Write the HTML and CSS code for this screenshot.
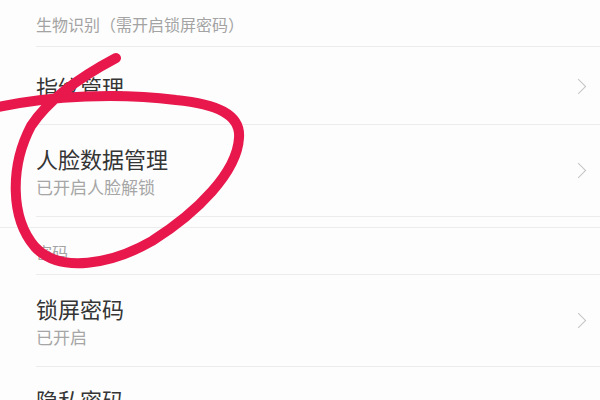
FILE: index.html
```html
<!DOCTYPE html>
<html lang="zh-CN">
<head>
  <meta charset="UTF-8" />
  <meta name="viewport" content="width=device-width, initial-scale=1.0"/>
  <title>生物识别与密码</title>
  <link rel="stylesheet" href="styles.css">
</head>
<body>

  <main class="settings">
    <div class="section-title">生物识别（需开启锁屏密码）</div>

    <div class="row single">
      <div class="row-text">
        <div class="row-title">指纹管理</div>
      </div>
      <span class="chevron"></span>
    </div>

    <div class="row">
      <div class="row-text">
        <div class="row-title">人脸数据管理</div>
        <div class="row-sub">已开启人脸解锁</div>
      </div>
      <span class="chevron"></span>
    </div>

    <div class="section-gap"></div>

    <div class="section-title">密码</div>

    <div class="row">
      <div class="row-text">
        <div class="row-title">锁屏密码</div>
        <div class="row-sub">已开启</div>
      </div>
      <span class="chevron"></span>
    </div>

    <div class="row last">
      <div class="row-text">
        <div class="row-title">隐私密码</div>
      </div>
    </div>
  </main>

  <!-- hand-drawn mark over the list -->
  <svg class="scribble" width="600" height="400" viewBox="0 0 600 400">
    <path d="M116 58 C82 76 48 100 31 126 C10 166 10 218 35 247 C60 274 112 264 152 241 C198 212 237 172 239 138 C241 114 216 104 176 100 C120 93 52 95 -6 108"
          fill="none" stroke="#e8174c" stroke-width="10" stroke-linecap="round" stroke-linejoin="round"/>
  </svg>

</body>
</html>
```

FILE: styles.css
```css
body {
  margin: 0;
  padding: 0;
  background-color: #fdfdfd;
  font-family: "Noto Sans CJK SC", "Noto Sans", sans-serif;
  color: #333;
  width: 600px;
  height: 400px;
  overflow: hidden;
  position: relative;
}

.settings {
  display: flex;
  flex-direction: column;
}

.section-title {
  position: relative;
  height: 47px;
  line-height: 48px;
  padding-left: 36px;
  font-size: 16px;
  color: #a3a3a3;
}

/* inset dividers */
.section-title::after,
.row::after {
  content: "";
  position: absolute;
  left: 36px;
  right: 0;
  bottom: 0;
  height: 1px;
  background-color: #ececec;
}

.row {
  position: relative;
  display: flex;
  align-items: center;
  justify-content: space-between;
  padding: 17px 10px 18px 36px;
}

.row.single {
  padding: 23px 10px 23px 36px;
}

.row.last {
  padding-top: 16px;
}

.row-title {
  font-size: 22px;
  line-height: 32px;
  color: #353535;
}

.row-sub {
  font-size: 17px;
  line-height: 25px;
  color: #a6a6a6;
}

.chevron {
  width: 10px;
  height: 10px;
  border-top: 1.5px solid #c4c4c4;
  border-right: 1.5px solid #c4c4c4;
  transform: rotate(45deg);
  margin-right: 6px;
}

.section-gap {
  height: 10px;
  border-bottom: 1px solid #ececec;
}

.scribble {
  position: absolute;
  left: 0;
  top: 0;
  pointer-events: none;
}
```
